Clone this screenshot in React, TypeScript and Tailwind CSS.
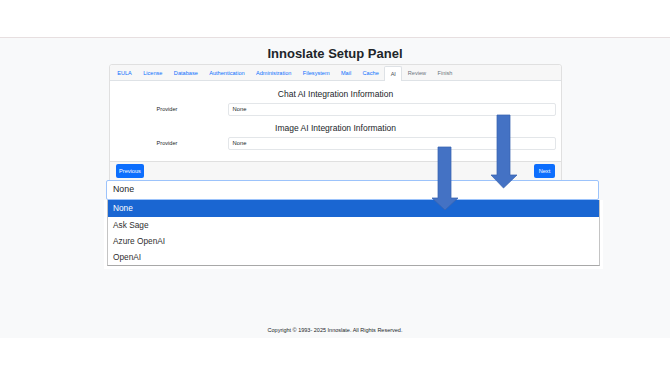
import React from "react";

const tabs: { label: string; state: "link" | "active" | "disabled" }[] = [
  { label: "EULA", state: "link" },
  { label: "License", state: "link" },
  { label: "Database", state: "link" },
  { label: "Authentication", state: "link" },
  { label: "Administration", state: "link" },
  { label: "Filesystem", state: "link" },
  { label: "Mail", state: "link" },
  { label: "Cache", state: "link" },
  { label: "AI", state: "active" },
  { label: "Review", state: "disabled" },
  { label: "Finish", state: "disabled" },
];

function ProviderRow() {
  return (
    <div className="flex items-center h-[13px] mt-[3px]">
      <div className="w-[103px] text-center text-[5.6px] text-[#212529]">Provider</div>
      <div className="ml-[9px] flex-1 h-[13px] bg-white border border-[#e3e6e9] rounded-[2px] flex items-center pl-[4px] text-[5.8px] text-[#212529]">
        None
      </div>
    </div>
  );
}

export default function App() {
  return (
    <div
      className="relative w-[670px] h-[376px] bg-white overflow-hidden"
      style={{ fontFamily: '"Liberation Sans", Arial, sans-serif' }}
    >
      <div className="h-[37px] bg-white" />
      <div className="h-[301px] border-t border-[#e7dfe0] bg-[#f8f9fa] flex flex-col items-center">
        <h1 className="pt-[7px] text-[13px] leading-[17px] font-bold text-[#212529]">
          Innoslate Setup Panel
        </h1>
        <div className="mt-[2px] w-[453px] bg-white border border-[#e0e0e0] rounded-[3px]">
          <div className="bg-[#f7f7f7] border-b border-[#dee2e6] pt-[2px] pl-[2px] flex h-[16px] items-end rounded-t-[3px]">
            {tabs.map((t) => (
              <div
                key={t.label}
                className={
                  t.state === "active"
                    ? "px-[5.2px] text-[5.6px] leading-[14px] text-[#495057] bg-white border border-b-0 border-[#dee2e6] rounded-t-[2px] -mb-[1px] h-[15px]"
                    : t.state === "disabled"
                    ? "h-[14px] px-[5.7px] text-[5.6px] leading-[14px] text-[#6c757d]"
                    : "h-[14px] px-[5.7px] text-[5.6px] leading-[14px] text-[#0d6efd]"
                }
              >
                {t.label}
              </div>
            ))}
          </div>
          <div className="pt-[7px] pb-[11px] pl-[6px] pr-[5px]">
            <div className="text-center text-[8.5px] leading-[12px] text-[#212529]">
              Chat AI Integration Information
            </div>
            <ProviderRow />
            <div className="mt-[6px] text-center text-[8.5px] leading-[12px] text-[#212529]">
              Image AI Integration Information
            </div>
            <ProviderRow />
          </div>
          <div className="bg-[#f7f7f7] border-t border-[#e0e0e0] px-[6px] pt-[2px] pb-[4px] flex justify-between rounded-b-[3px]">
            <button className="h-[14px] px-[3.6px] bg-[#0d6efd] rounded-[2px] text-white text-[5.6px] leading-[14px]">
              Previous
            </button>
            <button className="h-[14px] px-[4.3px] bg-[#0d6efd] rounded-[2px] text-white text-[5.6px] leading-[14px]">
              Next
            </button>
          </div>
        </div>
        <div className="mt-auto pb-[4px] text-[5.5px] leading-[7px] text-[#212529]">
          Copyright © 1993- 2025 Innoslate. All Rights Reserved.
        </div>
      </div>

      {/* open select dropdown */}
      <div className="absolute left-[106px] top-[180px] w-[493px] h-[20px] bg-white border border-[#9cc3fb] rounded-[2px] flex items-center pl-[6px] text-[8.8px] text-[#212529]">
        None
      </div>
      <div className="absolute left-[104px] top-[200px] w-[499px] h-[69px] bg-white px-[3px]">
        <div className="border-x border-b border-[#c4c4c4] border-b-[#a8a8a8] border-b-[1.5px] text-[8.3px] text-[#303030]">
          <div className="h-[17px] bg-[#1a66d2] text-white flex items-center pl-[5px]">None</div>
          <div className="h-[16px] flex items-center pl-[5px]">Ask Sage</div>
          <div className="h-[16px] flex items-center pl-[5px]">Azure OpenAI</div>
          <div className="h-[16px] flex items-center pl-[5px]">OpenAI</div>
        </div>
      </div>

      {/* annotation arrows */}
      <svg className="absolute left-0 top-0 pointer-events-none" width="670" height="376" viewBox="0 0 670 376">
        <polygon
          points="438,147 451,147 451,198 458,198 445,210 432,198 438,198"
          fill="#4472c4"
          stroke="#3a64b0"
          strokeWidth="0.75"
        />
        <polygon
          points="497,115 510,115 510,175 517,175 503.5,188 491,175 497,175"
          fill="#4472c4"
          stroke="#3a64b0"
          strokeWidth="0.75"
        />
      </svg>
    </div>
  );
}
